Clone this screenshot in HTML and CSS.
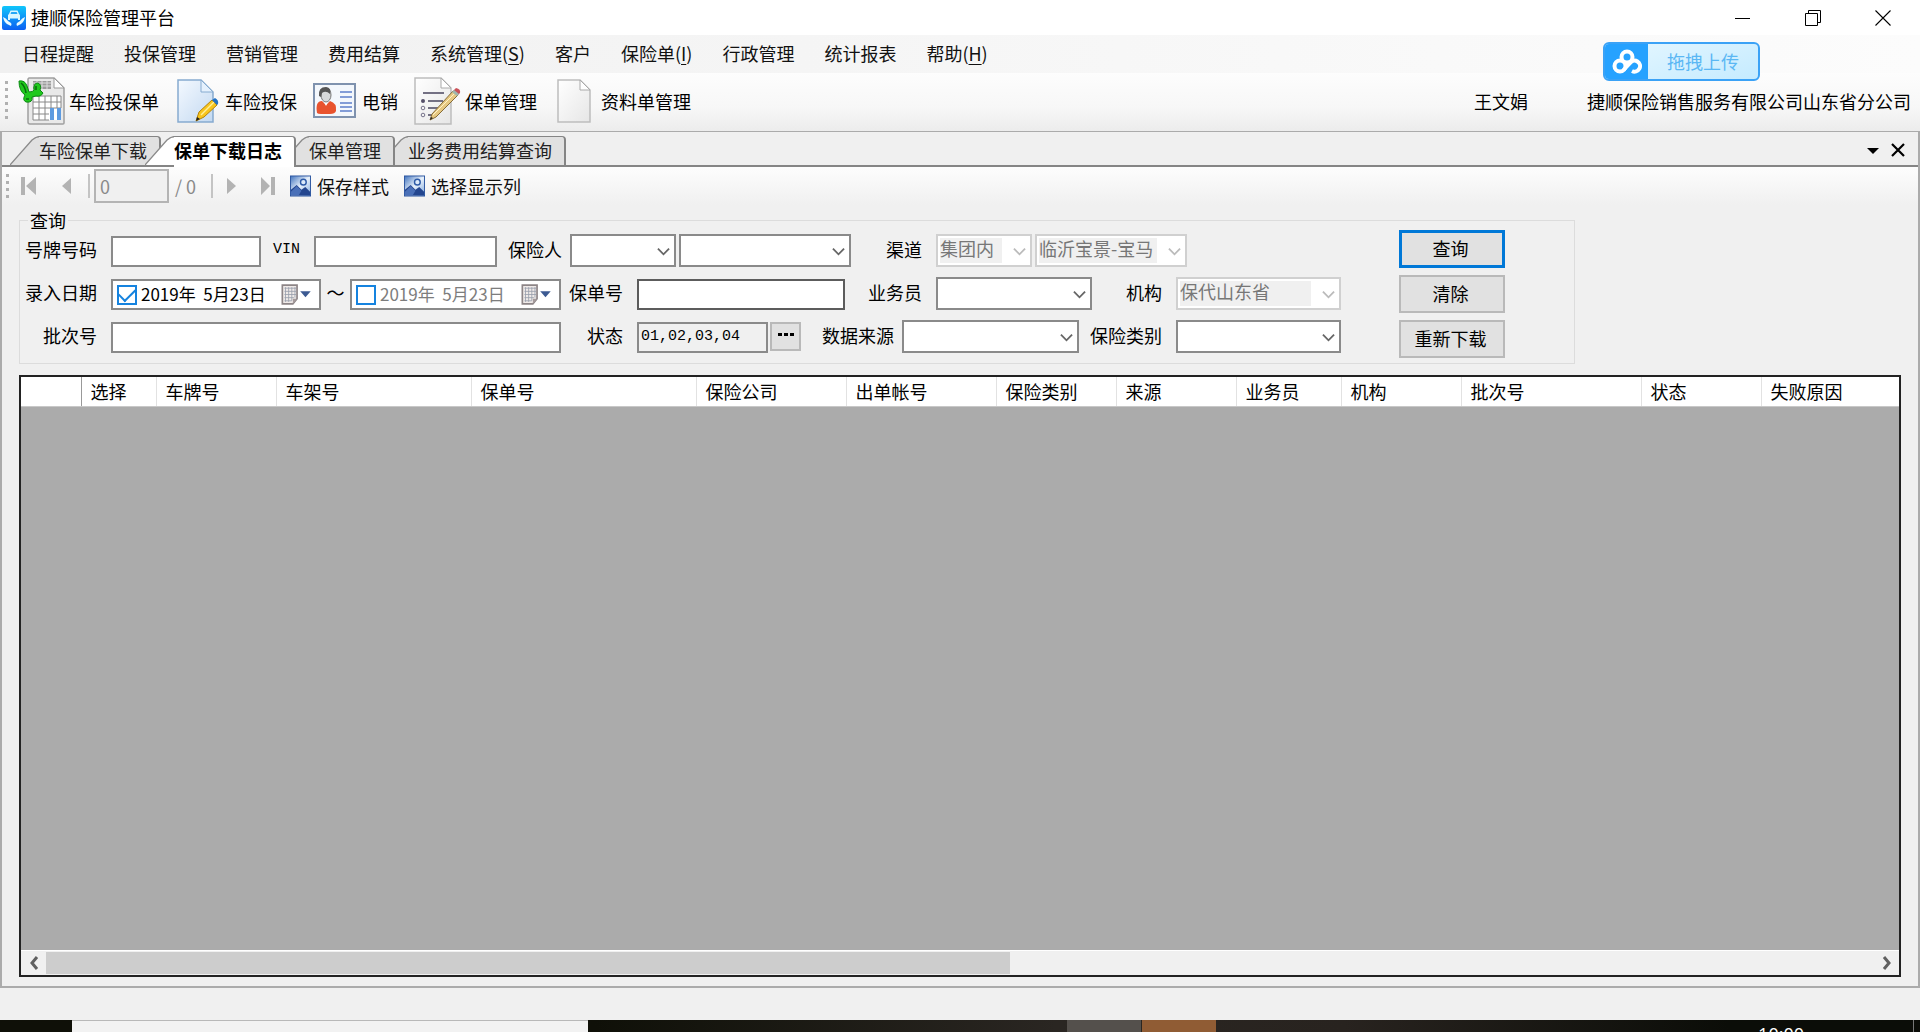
FILE: index.html
```html
<!DOCTYPE html>
<html lang="zh-CN">
<head>
<meta charset="utf-8">
<title>捷顺保险管理平台</title>
<link rel="stylesheet" href="styles.css">
</head>
<body>
<svg class="defs" aria-hidden="true">
  <defs>
    <linearGradient id="app-blue" x1="0" y1="0" x2="0" y2="1"><stop offset="0" stop-color="#10c6fb"/><stop offset="1" stop-color="#0b5ff2"/></linearGradient>
    <linearGradient id="page-blue" x1="0" y1="0" x2="1" y2="1"><stop offset="0" stop-color="#f4f9ff"/><stop offset="1" stop-color="#c3d9f1"/></linearGradient>
    <linearGradient id="page-grey" x1="0" y1="0" x2="1" y2="1"><stop offset="0" stop-color="#fff"/><stop offset="1" stop-color="#e6e6e6"/></linearGradient>
    <linearGradient id="pic-blue" x1="0" y1="0" x2="1" y2="1"><stop offset="0" stop-color="#3f72bd"/><stop offset=".5" stop-color="#e8f1fb"/><stop offset="1" stop-color="#7ca6dc"/></linearGradient>
  </defs>
  <symbol id="chevron" viewBox="0 0 14 14"><path d="M1 4l6 6 6-6" fill="none" stroke="currentColor" stroke-width="2"/></symbol>
  <symbol id="slope" viewBox="0 0 30 29"><path d="M0 29L22 4Q26 0 30 0V29z"/><path d="M0 29L22 4Q26 .5 30 .5" fill="none" stroke="#8a8a8a" stroke-width="1.3"/></symbol>
  <symbol id="picture" viewBox="0 0 22 22"><rect x=".5" y=".5" width="21" height="21" fill="url(#pic-blue)" stroke="#2c56a0"/><path d="M1 21V15L7 10L12 15L16 12L21 17V21z" fill="#24468f"/><circle cx="14" cy="7" r="3" fill="#dceafa" stroke="#2e5ba8" stroke-width="1.5"/><path d="M7 11L12 16L9 21H1V17z" fill="#4a70b8"/></symbol>
  <symbol id="calendar" viewBox="0 0 28 20"><path d="M1 1H15V14L11 19H1z" fill="#efeae8" stroke="#8d8587" stroke-width="1.6"/><path d="M3 4H14M3 7H14M3 10H14M3 13H12M3 16H10M4 3V17M7 3V17M10 3V16M13 3V13" stroke="#9aa0ad" stroke-width=".8"/><path d="M15 14H11V19z" fill="#a59b9c"/><path d="M18 7H28L23 12.500z" fill="#3c5a92"/></symbol>
</svg>

<header class="titlebar">
  <svg class="app-icon" viewBox="0 0 24 24"><rect width="24" height="24" rx="2" fill="url(#app-blue)"/><path d="M7 8L8.500 4.500H15.500L17 8L18 9V14H16V12.500H8V14H6V9z" fill="#d9f6ff"/><path d="M8.500 8L9.300 6H14.700L15.500 8z" fill="#25a6f5"/><path d="M1 11Q4 12 6 15L9 17Q10 18 9 20L5 18Q2 16 1 11zM23 11Q20 12 18 15L15 17Q14 18 15 20L19 18Q22 16 23 11z" fill="#e9faff"/></svg>
  <h1 class="title">捷顺保险管理平台</h1>
  <div class="window-buttons">
    <button aria-label="最小化"><svg viewBox="0 0 16 16"><path d="M0 8.500H15" stroke="#000"/></svg></button>
    <button aria-label="还原"><svg viewBox="0 0 16 16"><path d="M.5 3.500H12.500V15.500H.5zM3.500 3.500V.5H15.500V12.500H12.500" fill="none" stroke="#000"/></svg></button>
    <button aria-label="关闭"><svg viewBox="0 0 16 16"><path d="M.5 .5L15.500 15.500M15.500 .5L.5 15.500" stroke="#000" stroke-width="1.100"/></svg></button>
  </div>
</header>

<nav class="menubar">
  <a href="#">日程提醒</a><a href="#">投保管理</a><a href="#">营销管理</a><a href="#">费用结算</a><a href="#">系统管理(<u>S</u>)</a><a href="#">客户</a><a href="#">保险单(<u>I</u>)</a><a href="#">行政管理</a><a href="#">统计报表</a><a href="#">帮助(<u>H</u>)</a>
  <button class="upload">
    <span class="upload-mark"><svg viewBox="0 0 30 26"><g fill="none" stroke="#fff" stroke-width="4"><circle cx="15" cy="8" r="5.500"/><circle cx="8" cy="17" r="5.500"/><path d="M11.500 21L18 14A5.500 5.500 0 1 1 20 22"/></g></svg></span>
    <span class="upload-text">拖拽上传</span>
  </button>
</nav>

<div class="toolbar">
  <span class="grip"></span>
  <button class="tool tool-first"><svg width="47" height="48" viewBox="0 0 47 48"><path d="M11 1H36L46 11V46Q46 47 45 47H12Q10 47 10 45V2z" fill="#e9e9e9" stroke="#a0a0a0" stroke-width="1.500"/><path d="M36 1V11H46z" fill="#fff" stroke="#999"/><path d="M15 4H33V12H15z" fill="#9c9c9c"/><path d="M15 6H33M15 9H33M19 4V12M24 4V12M29 4V12" stroke="#ddd"/><path d="M15 19H43V43H15z" fill="#fff"/><path d="M15 19H43M15 25H43M15 31H43M15 37H31M15 43H31M15 19V43M21 19V43M27 19V43M33 19V31M39 19V31M43 19V31" stroke="#888"/><path d="M32 31H36V43H32zM39 31H43V43H39z" fill="#5e9be0"/><path d="M1 4Q7 3 9 9L11 15Q15 15 16 13Q15 6 20 6Q24 8 22 13L25 16Q23 20 18 19L14 20Q15 26 8 25Q4 23 7 18Q1 14 1 4z" fill="#20c91d" stroke="#0b8a12"/><path d="M3 6Q7 9 8 16M8 22h3M18 9v4" fill="none" stroke="#086b0c" stroke-width="1.500"/></svg>车险投保单</button>
  <button class="tool"><svg width="42" height="44" viewBox="0 0 42 44"><path d="M1 1H24L36 13V43H1z" fill="url(#page-blue)" stroke="#86abd0" stroke-width="1.500"/><path d="M24 1V13H36z" fill="#e5f1fd" stroke="#86abd0"/><path d="M19 42L22 33L35 21L40 26L27 38z" fill="#f7c51e" stroke="#b78307"/><path d="M24 36L37 23" stroke="#fff09a" stroke-width="1.500"/><path d="M35 21L38 19Q42 21 41 25L40 26z" fill="#2372c4"/><path d="M19 42L20 38L23 40z" fill="#222"/></svg>车险投保</button>
  <button class="tool"><svg width="43" height="35" viewBox="0 0 43 35"><rect x="1" y="1" width="41" height="33" fill="#f3f7fc" stroke="#7f92ae" stroke-width="2"/><path d="M4 30Q2 18 9 18L13 22L17 18Q24 20 23 28Q22 31 17 31H8Q5 31 4 30z" fill="#e8532e"/><path d="M10 17L13 23L16 17z" fill="#fff"/><ellipse cx="13" cy="12" rx="5" ry="7" fill="#d7d9da" stroke="#777"/><path d="M6 13Q5 4 13 4Q19 5 17 11Q13 7 9 10L8 14z" fill="#555"/><path d="M27 9H39M27 14H39M27 20H39M27 24H39M27 28H39" stroke="#5e7fca" stroke-width="1.500"/></svg>电销</button>
  <button class="tool tool-first"><svg width="47" height="48" viewBox="0 0 47 48"><path d="M1 1H27L37 11V47H1z" fill="url(#page-grey)" stroke="#bdbdbd" stroke-width="1.500"/><path d="M27 1V11H37z" fill="#fff" stroke="#aaa"/><path d="M9 16H30M14 24H29M14 31H25M14 38H22" stroke="#737083" stroke-width="2"/><circle cx="9" cy="24" r="2" fill="#555069"/><g fill="none" stroke="#77738a"><circle cx="9" cy="31" r="1.800"/><circle cx="9" cy="38" r="1.800"/></g><path d="M16 43L18 37L39 14L44 18L22 40z" fill="#e7c983" stroke="#856b38"/><path d="M19 38L41 16" stroke="#fff3ca"/><path d="M39 14L42 11Q47 12 46 16L44 18z" fill="#ca5259"/><path d="M38 15L40 13L45 17L43 19z" fill="#9fb7ae"/><path d="M16 43L17 40L19 41z" fill="#222"/></svg>保单管理</button>
  <button class="tool tool-last"><svg width="34" height="44" viewBox="0 0 34 44"><path d="M1 1H23L33 11V43H1z" fill="url(#page-grey)" stroke="#bdbdbd" stroke-width="1.500"/><path d="M23 1V11H33z" fill="#fff" stroke="#aaa"/></svg>资料单管理</button>
  <span class="user">王文娟</span>
  <span class="company">捷顺保险销售服务有限公司山东省分公司</span>
</div>

<main class="workspace">
  <div class="tabs" role="tablist">
    <button class="tab" role="tab"><svg><use href="#slope"/></svg><span>车险保单下载</span></button>
    <button class="tab active" role="tab" aria-selected="true"><svg><use href="#slope"/></svg><span>保单下载日志</span></button>
    <button class="tab" role="tab"><svg><use href="#slope"/></svg><span>保单管理</span></button>
    <button class="tab" role="tab"><svg><use href="#slope"/></svg><span>业务费用结算查询</span></button>
    <div class="tab-tools">
      <button aria-label="标签列表"><svg viewBox="0 0 14 14"><path d="M1 5H13L7 11z"/></svg></button>
      <button aria-label="关闭标签"><svg viewBox="0 0 14 14"><path d="M1 1L13 13M13 1L1 13" stroke="#000" stroke-width="2.200"/></svg></button>
    </div>
  </div>

  <div class="navigator">
    <span class="grip"></span>
    <button class="step" aria-label="首条" disabled><svg viewBox="0 0 16 18"><path d="M0 0H4V18H0zM15 0V18L5 9z"/></svg></button>
    <button class="step" aria-label="上一条" disabled><svg viewBox="0 0 16 18"><path d="M13 1V17L4 9z"/></svg></button>
    <span class="sep"></span>
    <input class="position" type="text" value="0" aria-label="当前位置" disabled>
    <span class="total">/ 0</span>
    <span class="sep"></span>
    <button class="step" aria-label="下一条" disabled><svg viewBox="0 0 16 18"><path d="M3 1V17L12 9z"/></svg></button>
    <button class="step" aria-label="末条" disabled><svg viewBox="0 0 16 18"><path d="M10 0H14V18H10zM0 0V18L9 9z"/></svg></button>
    <button class="nav-action"><svg><use href="#picture"/></svg>保存样式</button>
    <button class="nav-action"><svg><use href="#picture"/></svg>选择显示列</button>
  </div>

  <form class="query-form">
  <fieldset>
    <legend>查询</legend>
    <div class="query">
      <div class="rows">
        <div class="row row-one">
          <label for="plate">号牌号码</label><input id="plate" type="text">
          <label for="vin" class="mono">VIN</label><input id="vin" type="text">
          <label for="insurer" class="near">保险人</label>
          <span class="combo"><select id="insurer"></select><svg><use href="#chevron"/></svg></span>
          <span class="combo after"><select aria-label="保险人分支"></select><svg><use href="#chevron"/></svg></span>
          <label for="channel">渠道</label>
          <span class="combo off"><select id="channel" disabled><option>集团内</option></select><svg><use href="#chevron"/></svg></span>
          <span class="combo off after"><select aria-label="渠道网点" disabled><option>临沂宝景-宝马</option></select><svg><use href="#chevron"/></svg></span>
        </div>
        <div class="row row-two">
          <label for="from">录入日期</label>
          <span class="date"><input type="checkbox" aria-label="启用开始日期" checked><input id="from" type="text" value="2019年  5月23日"><button type="button" aria-label="选择开始日期"><svg><use href="#calendar"/></svg></button></span>
          <label for="to" class="tilde">～</label>
          <span class="date unset"><input type="checkbox" aria-label="启用结束日期"><input id="to" type="text" value="2019年  5月23日"><button type="button" aria-label="选择结束日期"><svg><use href="#calendar"/></svg></button></span>
          <label for="policy">保单号</label><input id="policy" class="strong" type="text">
          <label for="agent">业务员</label>
          <span class="combo"><select id="agent"></select><svg><use href="#chevron"/></svg></span>
          <label for="org">机构</label>
          <span class="combo off"><select id="org" disabled><option>保代山东省</option></select><svg><use href="#chevron"/></svg></span>
        </div>
        <div class="row row-three">
          <label for="batch">批次号</label><input id="batch" type="text">
          <label for="status">状态</label><input id="status" class="readonly" type="text" value="01,02,03,04" readonly>
          <button type="button" class="more" aria-label="选择状态"><svg viewBox="0 0 16 4"><path d="M0 0H4V3H0zM6 0H10V3H6zM12 0H16V3H12z"/></svg></button>
          <label for="source" class="near">数据来源</label>
          <span class="combo"><select id="source"></select><svg><use href="#chevron"/></svg></span>
          <label for="kind">保险类别</label>
          <span class="combo"><select id="kind"></select><svg><use href="#chevron"/></svg></span>
        </div>
      </div>
      <div class="actions">
        <button type="button" class="primary">查询</button>
        <button type="button">清除</button>
        <button type="button">重新下载</button>
      </div>
    </div>
  </fieldset>
  </form>

  <section class="grid">
    <table>
      <colgroup><col class="c60"><col class="c75"><col class="c120"><col class="c195"><col class="c225"><col class="c150"><col class="c150"><col class="c120"><col class="c120"><col class="c105"><col class="c120"><col class="c180"><col class="c120"><col></colgroup>
      <thead><tr><th></th><th>选择</th><th>车牌号</th><th>车架号</th><th>保单号</th><th>保险公司</th><th>出单帐号</th><th>保险类别</th><th>来源</th><th>业务员</th><th>机构</th><th>批次号</th><th>状态</th><th>失败原因</th></tr></thead>
    </table>
    <div class="scrollbar">
      <button aria-label="向左滚动"><svg viewBox="0 0 10 14"><path d="M8 1L3 7L8 13" fill="none" stroke="#606060" stroke-width="3"/></svg></button>
      <div class="track"><div class="thumb"></div></div>
      <button aria-label="向右滚动"><svg viewBox="0 0 10 14"><path d="M2 1L7 7L2 13" fill="none" stroke="#606060" stroke-width="3"/></svg></button>
    </div>
  </section>
</main>

<div class="statusbar"></div>
<footer class="taskbar">
  <div class="search"></div>
  <div class="task"></div>
  <div class="task alert"></div>
  <time class="clock">10:00</time>
  <span class="desktop"></span>
</footer>
</body>
</html>
```
FILE: styles.css
```css
* { box-sizing: border-box; }

body {
  margin: 0;
  min-height: 100vh;
  display: flex;
  flex-direction: column;
  background: #f0f0f0;
  color: #000;
  font: 18px/24px "Noto Sans CJK SC", sans-serif;
}

button, input, select { font: inherit; color: inherit; margin: 0; border-radius: 0; }
button { padding: 0; border: 0; background: none; }
svg { display: block; flex: none; }
.defs { position: absolute; width: 0; height: 0; }

/* Title bar */
.titlebar { display: flex; align-items: center; height: 35px; padding: 0 2px; background: #fff; }
.app-icon { width: 24px; height: 24px; }
.title { margin: 0 auto 0 5px; padding-bottom: 2px; font-size: 18px; font-weight: 400; }
.window-buttons { display: flex; }
.window-buttons button { width: 70px; height: 33px; display: grid; place-items: center; }
.window-buttons svg { width: 16px; height: 16px; }

/* Menu */
.menubar {
  position: relative;
  display: flex;
  align-items: center;
  gap: 30px;
  height: 38px;
  padding: 0 0 2px 22px;
  background: linear-gradient(90deg, #f0f0f0, #fcfcfc);
}
.menubar a { color: #111; text-decoration: none; }
.menubar u { text-underline-offset: 3px; }
.upload {
  position: absolute;
  top: 7px;
  right: 160px;
  z-index: 2;
  display: flex;
  width: 157px;
  height: 39px;
  overflow: hidden;
  border: 2px solid #3ba2f6;
  border-radius: 6px;
  background: linear-gradient(160deg, #e6f7ff, #c5ebff);
}
.upload-mark { width: 43px; height: 35px; display: grid; place-items: center; background: #26a2ff; }
.upload-mark svg { width: 30px; height: 26px; }
.upload-text { flex: 1; line-height: 35px; color: #5ab7f4; }

/* Main toolbar */
.toolbar {
  display: flex;
  align-items: center;
  height: 59px;
  padding: 0 9px 3px 5px;
  background: linear-gradient(#fdfdfd, #f7f7f7 60%, #ececec);
  border-bottom: 1px solid #ababab;
}
.grip { width: 3px; height: 39px; margin-right: 10px; background: repeating-linear-gradient(#b0b0b0 0 3px, transparent 3px 7px); }
.tool { display: flex; align-items: center; gap: 6px; margin-right: 16px; white-space: nowrap; }
.tool-first { gap: 4px; margin-right: 18px; }
.tool-last { margin-left: 2px; gap: 10px; }
.user { margin-left: auto; }
.company { margin-left: 59px; }

/* Work area */
.workspace {
  flex: 1;
  display: flex;
  flex-direction: column;
  border: solid #ababab;
  border-width: 0 2px 2px;
}
.tabs {
  display: flex;
  align-items: flex-end;
  height: 35px;
  padding-left: 8px;
  border-bottom: 2px solid #858585;
}
.tab { position: relative; display: flex; height: 29px; margin-right: -16px; color: #222; }
.tab svg { width: 30px; height: 29px; margin-right: -1px; fill: #e1e1e1; }
.tab span {
  padding-right: 12px;
  height: 29px;
  line-height: 26px;
  border: solid #858585;
  border-width: 1px 2px 0 0;
  border-top-right-radius: 4px;
  background: #e1e1e1;
}
.tab:nth-child(1) { z-index: 1; }
.tab:nth-child(2) { z-index: 4; }
.tab:nth-child(3) { z-index: 3; }
.tab:nth-child(4) { z-index: 2; }
.tab.active { height: 31px; margin-bottom: -2px; color: #000; font-weight: 700; }
.tab.active svg { fill: #fff; }
.tab.active span { height: 31px; background: #fff; }
.tab-tools { display: flex; gap: 11px; margin-left: auto; padding: 0 13px 8px 0; }
.tab-tools svg { width: 14px; height: 14px; }

/* Record navigator */
.navigator {
  display: flex;
  align-items: center;
  height: 38px;
  padding-left: 4px;
  background: linear-gradient(#fdfdfd, #f0f0f0);
  color: #111;
}
.navigator .grip { height: 24px; margin-right: 12px; }
.step { width: 37px; }
.step svg { width: 16px; height: 18px; fill: #b3b3b3; }
.sep { width: 2px; height: 24px; background: #c4c4c4; }
.step + .sep { margin-left: -7px; }
.navigator .position { width: 75px; height: 34px; margin: 0 6px 0 4px; padding: 0 4px; border-color: #b4b4b4; background: #f0f0f0; color: #8a8a8a; }
.total { width: 36px; color: #8a8a8a; }
.sep + .step { margin-left: 11px; }
.nav-action { display: flex; align-items: center; gap: 6px; margin-right: 15px; }
.step + .nav-action { margin-left: -8px; }
.nav-action svg { width: 21px; height: 22px; }

/* Query panel */
.query-form { margin: 5px 17px 0; }
fieldset { max-width: 1556px; margin: 0; padding: 0 0 5px 5px; border: 1px solid #dcdcdc; }
legend { margin-left: 3px; padding: 0 2px; line-height: 20px; }
.query { display: flex; }
.rows { display: grid; align-content: start; gap: 10px; padding-top: 4px; }
.row { display: grid; grid-auto-rows: 33px; align-items: end; }
.row-one { grid-template-columns: 86px 150px 53px 183px 73px 106px 175px 85px 96px 155px; }
.row-two { grid-template-columns: 86px 210px 29px 211px 76px 208px 91px 156px 84px 165px; }
.row-three { grid-template-columns: 86px 450px 76px 131px 33px 101px 177px 97px 165px; }
label { align-self: start; padding-right: 14px; line-height: 30px; text-align: right; white-space: nowrap; }
.near { padding-right: 8px; }
.tilde { padding: 0; text-align: center; }
.mono { font: 15px/32px "Liberation Mono", monospace; }
input[type="text"] { width: 100%; min-width: 0; height: 31px; padding: 0 3px; border: 2px solid #8a8a8a; background: #fff; }
.row .strong { border-color: #5c5c5c; }
.row .readonly { padding: 0 2px 2px; background: #f0f0f0; font: 15px/24px "Liberation Mono", "Noto Sans CJK SC", monospace; }
.combo { position: relative; height: 33px; }
.combo.after { padding-left: 3px; }
.combo select { width: 100%; height: 33px; padding: 0 30px 4px 3px; appearance: none; border: 2px solid #8a8a8a; background: #fff; line-height: 24px; }
.combo svg { position: absolute; right: 6px; top: 11px; width: 13px; height: 13px; color: #666; pointer-events: none; }
.combo.off select { border-color: #d0d0d0; color: #777; opacity: 1; padding: 0 0 6px 2px; background: linear-gradient(#f0f0f0, #f0f0f0) 2px 2px / calc(100% - 30px) calc(100% - 4px) no-repeat #fff; }
.combo.off svg { color: #bbb; }
.date { display: flex; align-items: center; height: 31px; padding: 0 8px 0 4px; border: 2px solid #8a8a8a; background: #fff; }
.date input[type="text"] { flex: 1; height: 27px; padding: 0 4px 3px; border: 0; font-size: 17px; }
.date input[type="checkbox"] { appearance: none; flex: none; width: 20px; height: 20px; border: 2px solid #1583df; background: #fff; display: grid; place-items: center; }
.date input[type="checkbox"]:checked::before { content: ""; width: 14px; height: 8px; margin-bottom: 4px; border: solid #1583df; border-width: 0 0 2px 2px; transform: rotate(-45deg); }
.date svg { width: 30px; height: 21px; }
.unset { color: #7d7d7d; }
.more { width: 31px; height: 29px; margin: 0 0 2px 2px; display: grid; place-items: center; border: 2px solid #b9b9b9; background: #e1e1e1; }
.more svg { width: 16px; height: 4px; margin-bottom: 3px; }
.actions { display: grid; align-content: start; gap: 7px; margin-left: auto; padding-right: 69px; }
.actions button { width: 106px; height: 38px; padding: 0 3px 3px 0; border: 2px solid #b9b9b9; background: #e1e1e1; }
.actions .primary { border: 3px solid #0078d7; }

/* Result grid */
.grid {
  flex: 1;
  display: flex;
  flex-direction: column;
  min-height: 300px;
  margin: 11px 17px 9px;
  border: 2px solid #222;
  background: #ababab;
}
table { width: 100%; table-layout: fixed; border-collapse: collapse; }
th { height: 29px; padding: 0 0 0 9px; background: #fff; border-right: 1px solid #e2e2e2; border-bottom: 1px solid #c8c8c8; font-weight: 400; text-align: left; line-height: 26px; white-space: nowrap; }
th:first-child { border-right-color: #999; }
th:last-child { border-right: 0; }
.c60 { width: 60px; }
.c75 { width: 75px; }
.c105 { width: 105px; }
.c120 { width: 120px; }
.c150 { width: 150px; }
.c180 { width: 180px; }
.c195 { width: 195px; }
.c225 { width: 225px; }
.scrollbar { display: flex; height: 25px; margin-top: auto; background: #f0f0f0; border-top: 1px solid #fff; }
.scrollbar button { width: 25px; display: grid; place-items: center; }
.scrollbar svg { width: 10px; height: 14px; }
.track { flex: 1; padding: 1px 0; }
.thumb { width: calc(53% - 5px); height: 100%; background: #cdcdcd; }

.statusbar { height: 32px; }

/* Taskbar strip */
.taskbar {
  display: flex;
  height: 12px;
  padding-left: 72px;
  overflow: hidden;
  background: linear-gradient(90deg, #0f1008 0 31%, #2a2622 55%, #28231f 70%, #0b0d08 90%);
}
.search { width: 516px; background: #f2f2f2; border-top: 1px solid #b8b8b8; }
.task { width: 74px; margin-left: 479px; background: #54504c; }
.task.alert { margin-left: 1px; background: #905c34; }
.clock { margin: 2px 109px 0 auto; color: #fff; font: 18px/24px "Open Sans", sans-serif; }
.desktop { width: 1px; margin-right: 6px; background: #777; }
```
